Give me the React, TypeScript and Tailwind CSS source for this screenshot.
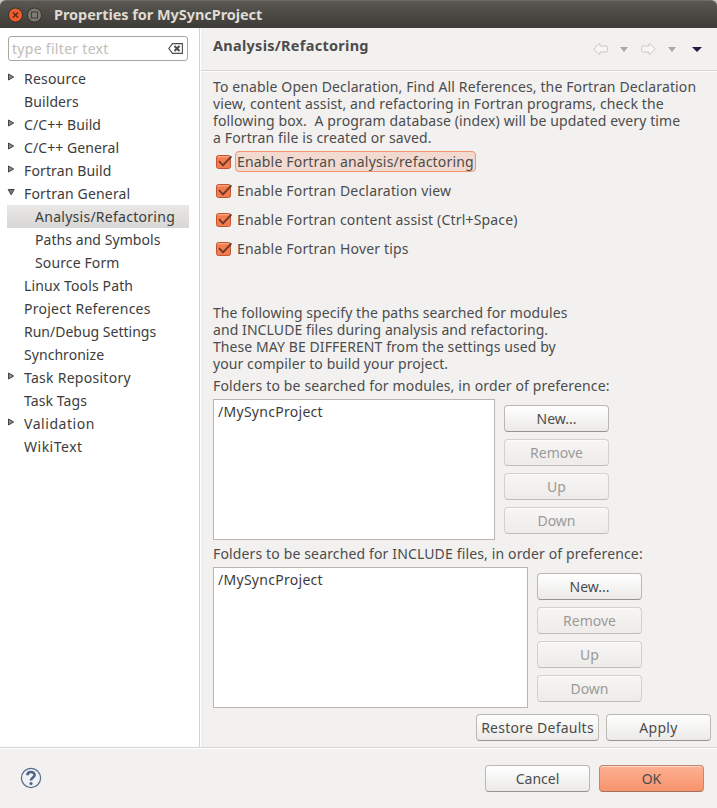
import React from "react";

type TreeItem = { label: string; level?: number; arrow?: "right" | "down"; selected?: boolean; tracking?: string };

const tree: TreeItem[] = [
  { label: "Resource", arrow: "right", tracking: "tracking-[0.2px]" },
  { label: "Builders", tracking: "tracking-[0.1px]" },
  { label: "C/C++ Build", arrow: "right", tracking: "tracking-[0.08px]" },
  { label: "C/C++ General", arrow: "right", tracking: "tracking-[0.08px]" },
  { label: "Fortran Build", arrow: "right", tracking: "tracking-[0.12px]" },
  { label: "Fortran General", arrow: "down", tracking: "tracking-[0.17px]" },
  { label: "Analysis/Refactoring", level: 1, selected: true, tracking: "tracking-[0.27px]" },
  { label: "Paths and Symbols", level: 1, tracking: "tracking-[0.06px]" },
  { label: "Source Form", level: 1, tracking: "tracking-[0.12px]" },
  { label: "Linux Tools Path", tracking: "tracking-[0.13px]" },
  { label: "Project References", tracking: "tracking-[0.26px]" },
  { label: "Run/Debug Settings" },
  { label: "Synchronize", tracking: "tracking-[0.05px]" },
  { label: "Task Repository", arrow: "right", tracking: "tracking-[0.27px]" },
  { label: "Task Tags", tracking: "tracking-[0.1px]" },
  { label: "Validation", arrow: "right", tracking: "tracking-[0.55px]" },
  { label: "WikiText", tracking: "tracking-[0.5px]" },
];

const intro = `To enable Open Declaration, Find All References, the Fortran Declaration
view, content assist, and refactoring in Fortran programs, check the
following box.  A program database (index) will be updated every time
a Fortran file is created or saved.`;

const pathsNote = `The following specify the paths searched for modules
and INCLUDE files during analysis and refactoring.
These MAY BE DIFFERENT from the settings used by
your compiler to build your project.`;

function TreeArrow({ dir }: { dir?: "right" | "down" }) {
  return (
    <svg className="mb-[3px] h-2 w-2 shrink-0" viewBox="0 0 8 8">
      {dir === "right" && <path d="M1.5 1 L6.7 4 L1.5 7 Z" fill="#8a8a8a" stroke="#444" strokeWidth="1" />}
      {dir === "down" && <path d="M1.2 1.5 L7.2 1.5 L4.2 6.8 Z" fill="#777" stroke="#444" strokeWidth="1" />}
    </svg>
  );
}

function Button({ label, className = "w-[105px]", kind = "normal" }: { label: string; className?: string; kind?: "normal" | "disabled" | "primary" }) {
  const look = {
    normal: "border-[#bbb7b2] border-b-[#979490] bg-linear-to-b from-white to-[#ebeae8] text-[#4c4c4c]",
    disabled: "border-[#d3d1ce] border-b-[#bfbdba] bg-linear-to-b from-[#f7f6f5] to-[#edeceb] text-[#9b9a98]",
    primary: "border-[#c48570] border-b-[#a5705e] bg-linear-to-b from-[#fdb092] to-[#f6936c] text-[#4c4c4c]",
  }[kind];
  return (
    <button className={`flex h-[27px] shrink-0 items-center justify-center rounded-[4px] border whitespace-nowrap shadow-[inset_0_1px_0_rgba(255,255,255,0.5)] ${look} ${className}`}>
      {label}
    </button>
  );
}

function Check({ label, focused }: { label: string; focused?: boolean }) {
  return (
    <div className="flex h-[29px] items-center tracking-[0.18px]">
      <svg className="ml-[3px] h-4 w-[17px] shrink-0" viewBox="0 0 17 16">
        <rect x=".5" y="1.5" width="14" height="13" rx="2" fill="#f27c4f" stroke="#c5532d" />
        <path d="M1.8 2.8 H13.2" stroke="#fbb295" strokeWidth="1" />
        <path d="M3 7.2 L7 11.3 L15.4 2.3" fill="none" stroke="#6b3a28" strokeWidth="1.9" />
      </svg>
      <span className={`ml-[2px] h-[21px] rounded-[4px] border px-px leading-[19px] ${focused ? "border-[#f0956f] bg-[#f2dad0]" : "border-transparent"}`}>{label}</span>
    </div>
  );
}

function NavIcon({ flip }: { flip?: boolean }) {
  return (
    <svg className={`h-3 w-[15px] ${flip ? "-scale-x-100" : ""}`} viewBox="0 0 15 12">
      <path d="M.8 6 L6 .6 H7 V3 H13 Q14.4 3 14.4 4.4 V7.6 Q14.4 9 13 9 H7 V11.4 H6 Z" fill="#f7f6f5" stroke="#c9c8c6" />
    </svg>
  );
}

function Caret({ dark }: { dark?: boolean }) {
  return (
    <svg className={dark ? "h-[5px] w-[10px]" : "h-[5px] w-2"} viewBox="0 0 10 5" preserveAspectRatio="none">
      <path d="M0 0 H10 L5 5 Z" fill={dark ? "#2b1842" : "#aaa9a7"} />
    </svg>
  );
}

function FolderList({ width }: { width: string }) {
  return (
    <div className="flex">
      <div className={`h-[141px] border border-[#b9b6b1] bg-white pl-1 leading-[24px] tracking-[0.28px] text-[#3c3c3c] ${width}`}>/MySyncProject</div>
      <div className="ml-[9px] flex flex-col gap-[7px] pt-[6px]">
        <Button label="New..." />
        <Button label="Remove" kind="disabled" />
        <Button label="Up" kind="disabled" />
        <Button label="Down" kind="disabled" />
      </div>
    </div>
  );
}

export default function App() {
  return (
    <div className="flex h-[808px] w-[717px] flex-col overflow-hidden bg-[#f2f1f0] font-['Noto_Sans',sans-serif] text-[14px] leading-[17px] text-[#4c4c4c]">
      <header className="h-7 shrink-0 bg-[#c9c8c6]">
        <div className="flex h-7 items-center rounded-t-[6px] border-t border-[#6c6a62] bg-linear-to-b from-[#595750] to-[#3d3c38] pl-2">
          <svg className="h-4 w-9" viewBox="0 0 36 16">
            <circle cx="7.5" cy="8" r="7" fill="#ee5c2d" stroke="#35332f" />
            <path d="M5 5.5 L10 10.5 M10 5.5 L5 10.5" stroke="#4b2b1d" strokeWidth="1.3" />
            <circle cx="26.5" cy="8" r="7" fill="#7c7a71" stroke="#35332f" />
            <rect x="23.5" y="5" width="6" height="6" fill="none" stroke="#3d3c37" />
          </svg>
          <span className="ml-[10px] text-[14.5px] font-bold tracking-[-0.06px] text-[#dfdbd2]">Properties for MySyncProject</span>
        </div>
      </header>

      <main className="flex h-[719px] shrink-0">
        <aside className="w-[200px] shrink-0 border-r border-[#d3d2d0] bg-white pt-2">
          <div className="ml-2 flex h-[25px] w-[180px] items-center justify-between rounded-[3px] border border-[#aaa6a0] pr-1 pl-[3px] text-[#c0bcb8]">
            <span className="tracking-[0.3px]">type filter text</span>
            <svg className="h-[11px] w-[15px]" viewBox="0 0 15 11">
              <path d="M4.5 .6 H14.4 V10.4 H4.5 L.8 5.5 Z" fill="#fff" stroke="#4c4c4c" strokeWidth="1.1" />
              <path d="M6.5 3 L11.5 8 M11.5 3 L6.5 8" stroke="#4c4c4c" strokeWidth="2" />
            </svg>
          </div>
          <nav className="mt-[6px] ml-[7px] w-[182px] text-[#3c3c3c]">
            {tree.map((t) => (
              <div key={t.label} className={`flex h-[23px] items-center ${t.selected ? "bg-linear-to-b from-[#e9e8e7] to-[#d8d7d5]" : ""}`}>
                <TreeArrow dir={t.arrow} />
                <span className={`whitespace-nowrap ${t.level ? "ml-5" : "ml-[9px]"} ${t.tracking ?? ""}`}>{t.label}</span>
              </div>
            ))}
          </nav>
        </aside>

        <section className="flex min-w-0 flex-1 flex-col border-l border-white">
          <div className="flex h-[43px] shrink-0 items-center border-b border-[#d5d3d1] pr-[15px] pl-3 shadow-[0_1px_0_white]">
            <h1 className="mb-[7px] flex-1 text-[14.5px] font-bold tracking-[0.27px]">Analysis/Refactoring</h1>
            <NavIcon />
            <span className="ml-3 flex"><Caret /></span>
            <span className="ml-[13px] flex"><NavIcon flip /></span>
            <span className="ml-3 flex"><Caret /></span>
            <span className="ml-4 flex"><Caret dark /></span>
          </div>
          <div className="pt-[7px] pl-3 whitespace-pre">
            <p className="tracking-[0.125px]">{intro}</p>
            <div className="mt-px">
              <Check label="Enable Fortran analysis/refactoring" focused />
              <Check label="Enable Fortran Declaration view" />
              <Check label="Enable Fortran content assist (Ctrl+Space)" />
              <Check label="Enable Fortran Hover tips" />
            </div>
            <p className="mt-[41px] tracking-[0.08px]">{pathsNote}</p>
            <p className="mt-[5px] mb-[5px] tracking-[0.15px]">Folders to be searched for modules, in order of preference:</p>
            <FolderList width="w-[282px]" />
            <p className="mt-[5px] mb-[5px] tracking-[0.14px]">Folders to be searched for INCLUDE files, in order of preference:</p>
            <FolderList width="w-[315px]" />
          </div>
          <div className="mt-[6px] mr-[6px] flex justify-end gap-[7px]">
            <Button label="Restore Defaults" className="w-[123px] tracking-[0.25px]" />
            <Button label="Apply" className="w-[105px] tracking-[0.3px]" />
          </div>
        </section>
      </main>

      <footer className="flex flex-1 items-center border-t border-[#d5d3d1] pr-[13px] pl-5 shadow-[inset_0_1px_0_white]">
        <svg className="h-[22px] w-[22px]" viewBox="0 0 22 22">
          <circle cx="11" cy="11" r="9.6" fill="#f0f1f4" stroke="#576a8c" strokeWidth="1.2" />
          <path d="M7.4 8.2 C7.4 4 14.6 4 14.6 8.1 C14.6 10.7 11 10.5 11 13.6" fill="none" stroke="#4e6286" strokeWidth="2.6" />
          <circle cx="11" cy="16.5" r="1.6" fill="#4e6286" />
        </svg>
        <div className="ml-auto flex gap-[9px]">
          <Button label="Cancel" />
          <Button label="OK" kind="primary" />
        </div>
      </footer>
    </div>
  );
}
